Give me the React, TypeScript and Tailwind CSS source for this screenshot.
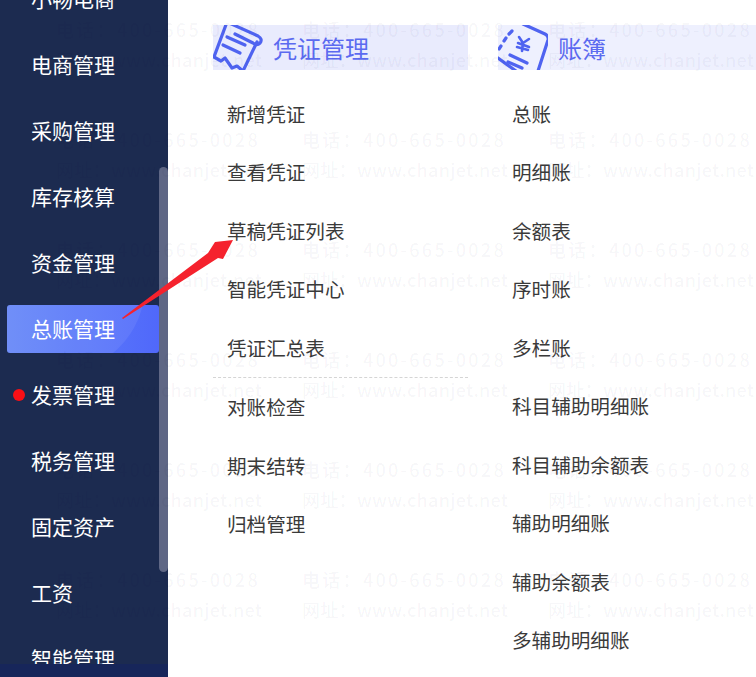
import React from 'react';

const sideItems = ['小畅电商', '电商管理', '采购管理', '库存核算', '资金管理', '总账管理', '发票管理', '税务管理', '固定资产', '工资', '智能管理'];
const voucherLinks = ['新增凭证', '查看凭证', '草稿凭证列表', '智能凭证中心', '凭证汇总表'];
const voucherLinks2 = ['对账检查', '期末结转', '归档管理'];
const bookLinks = ['总账', '明细账', '余额表', '序时账', '多栏账', '科目辅助明细账', '科目辅助余额表', '辅助明细账', '辅助余额表', '多辅助明细账'];

const VoucherIcon = () => (
  <svg viewBox="0 0 50 45" className="w-[50px] h-[45px] shrink-0" fill="none" stroke="#4f63f0" strokeWidth="3.2" strokeLinecap="round" strokeLinejoin="round">
    <path d="M14 -3 L1 32 L8 36 L12 33 L19 43 L24 41 L30 46 L44 17" />
    <path d="M14 -3 L45 11 Q50 14 47 18 Q44 21 40 18 L22 9" />
    <path d="M14 12 L32 20 M10 20 L27 28" />
  </svg>
);

const BookIcon = () => (
  <svg viewBox="0 0 50 45" className="w-[50px] h-[45px] shrink-0" fill="none" stroke="#4f63f0" strokeWidth="3.2" strokeLinecap="round" strokeLinejoin="round">
    <path d="M25 -1 L47 9 Q51 11 50 15 L40 46 M0 33 L18 46" />
    <path d="M14 6 L11 9 M8 13 L6 16 M3 21 L1 24" />
    <path d="M21 12 L25 18 L31 14 M25 18 L24 26 M20 18 L31 22 M19 22 L30 25" strokeWidth="2.6" />
    <path d="M12 30 L29 38 M10 37 L24 43" />
  </svg>
);

const App: React.FC = () => {
  return (
    <div className="relative flex h-[677px] w-[756px] overflow-hidden bg-white font-['Noto_Sans_CJK_SC','Microsoft_YaHei',sans-serif]">
      <aside className="relative w-[168px] shrink-0 overflow-hidden bg-[#1c2b50]">
        <div className="-mt-[34px] flex flex-col">
          {sideItems.map((item) => (
            <div key={item} className="relative flex h-[66px] shrink-0 items-center pl-[31px] text-[21px] text-white">
              {item === '总账管理' && (
                <div className="absolute left-[7px] top-[9px] h-[48px] w-[152px] overflow-hidden rounded-[3px] bg-gradient-to-r from-[#6586f8] to-[#5068fb]">
                  <div className="absolute -left-[38px] -top-[108px] h-[176px] w-[176px] rounded-full bg-white/[0.07]" />
                </div>
              )}
              {item === '发票管理' && <span className="absolute left-[13px] top-[27px] h-[12px] w-[12px] rounded-full bg-[#fa0f16]" />}
              <span className="relative">{item}</span>
            </div>
          ))}
        </div>
        <div className="absolute left-[159px] top-[167px] h-[405px] w-[9px] rounded-[5px] bg-[#5f6785]" />
        <div className="absolute bottom-0 left-0 h-[13px] w-full bg-[#17265a]" />
      </aside>

      <main className="flex flex-1 gap-[30px] pl-[45px] pt-[25px]">
        <section className="w-[255px] shrink-0">
          <div className="flex h-[45px] items-center overflow-hidden bg-[#e9ebfd] text-[24px] text-[#5b6af0]">
            <VoucherIcon />
            <span className="ml-[10px]">凭证管理</span>
          </div>
          <ul className="mt-[14px] pl-[14px] text-[19.6px] text-[#3a3a3a]">
            {voucherLinks.map((link) => (
              <li key={link} className="flex h-[58.5px] items-center">{link}</li>
            ))}
          </ul>
          <div className="border-t border-dashed border-[#d5d5d5]" />
          <ul className="pl-[14px] text-[19.6px] text-[#3a3a3a]">
            {voucherLinks2.map((link) => (
              <li key={link} className="flex h-[58.5px] items-center">{link}</li>
            ))}
          </ul>
        </section>
        <section className="w-[290px] shrink-0">
          <div className="flex h-[45px] items-center overflow-hidden bg-[#eef0fe] text-[24px] text-[#5b6af0]">
            <BookIcon />
            <span className="ml-[10px]">账簿</span>
          </div>
          <ul className="mt-[14px] pl-[14px] text-[19.6px] text-[#3a3a3a]">
            {bookLinks.map((link) => (
              <li key={link} className="flex h-[58.5px] items-center">{link}</li>
            ))}
          </ul>
        </section>
      </main>

      {/* watermark */}
      <div className="pointer-events-none absolute left-[56px] top-[16px] grid grid-cols-[repeat(3,246px)] auto-rows-[110px] text-[18px] font-medium text-[#000a40]/[0.045]">
        {Array.from({ length: 18 }).map((_, i) => (
          <div key={i} className="flex h-[57px] flex-col justify-between whitespace-nowrap">
            <span className="tracking-[2.3px]">电话：400-665-0028</span>
            <span className="tracking-[0.3px]">网址：www.chanjet.net</span>
          </div>
        ))}
      </div>

      {/* red arrow */}
      <svg className="pointer-events-none absolute left-[110px] top-[230px] h-[100px] w-[130px]" viewBox="0 0 130 100">
        <path d="M12 88 L98 23 L105 12 L123 10 L113 29 L108 28 L13 89 Z" fill="#f5222d" />
      </svg>
    </div>
  );
};

export default App;
